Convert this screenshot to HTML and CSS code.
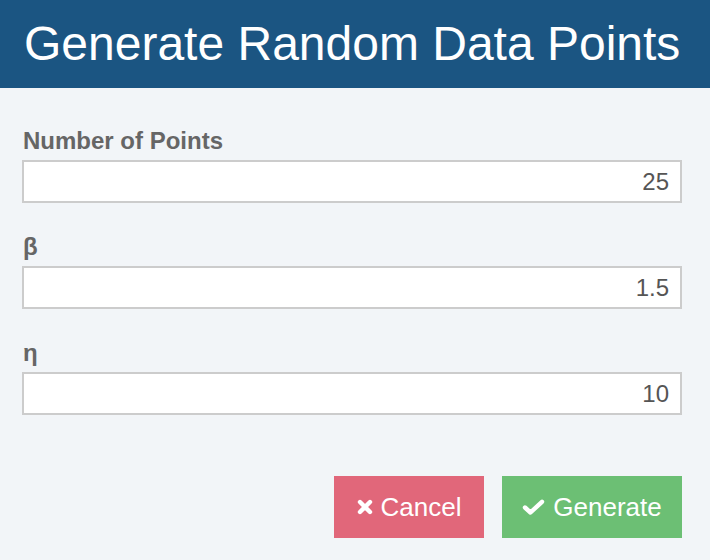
FILE: index.html
```html
<!DOCTYPE html>
<html lang="en">
<head>
    <meta charset="UTF-8">
    <meta name="viewport" content="width=device-width, initial-scale=1.0">
    <title>Generate Random Data Points</title>
    <link rel="stylesheet" href="styles.css">
</head>
<body>
    <div class="dialog">
        <div class="dialog-header">
            <h1>Generate Random Data Points</h1>
        </div>

        <div class="dialog-body">
            <div class="field">
                <label for="numPoints">Number of Points</label>
                <input type="text" id="numPoints" value="25">
            </div>
            <div class="field">
                <label for="beta">β</label>
                <input type="text" id="beta" value="1.5">
            </div>
            <div class="field">
                <label for="eta">η</label>
                <input type="text" id="eta" value="10">
            </div>
        </div>

        <div class="dialog-footer">
            <button class="btn btn-cancel">
                <svg class="icon" width="16" height="16" viewBox="0 0 16 16">
                    <path d="M3 3 L13 13 M13 3 L3 13" stroke="#fff" stroke-width="4.4" stroke-linecap="round"/>
                </svg>
                Cancel
            </button>
            <button class="btn btn-generate">
                <svg class="icon" width="23" height="16" viewBox="0 0 23 16">
                    <path d="M3 8.5 L8.5 13.5 L20 2.8" stroke="#fff" stroke-width="4.4" fill="none" stroke-linecap="round" stroke-linejoin="round"/>
                </svg>
                Generate
            </button>
        </div>
    </div>
</body>
</html>
```

FILE: styles.css
```css
body {
    margin: 0;
    font-family: "Liberation Sans", Arial, sans-serif;
    background-color: #f2f5f8;
}
.dialog {
    width: 710px;
    height: 560px;
    display: flex;
    flex-direction: column;
}
.dialog-header {
    background-color: #1b5582;
    height: 88px;
    display: flex;
    align-items: center;
    padding: 0 24px;
}
.dialog-header h1 {
    margin: 0;
    color: #fff;
    font-weight: normal;
    font-size: 48px;
    line-height: 1;
}
.dialog-body {
    padding: 40px 28px 0 22px;
    display: flex;
    flex-direction: column;
    gap: 31px;
}
.field {
    display: flex;
    flex-direction: column;
    gap: 6px;
}
.field label {
    font-size: 24px;
    font-weight: bold;
    color: #666;
    line-height: 26px;
    padding-left: 1px;
}
.field input {
    box-sizing: border-box;
    width: 660px;
    height: 43px;
    margin: 0;
    border: 2px solid #cccccc;
    background: #fff;
    text-align: right;
    padding: 0 11px;
    font-family: "Liberation Sans", Arial, sans-serif;
    font-size: 24px;
    color: #555;
    outline: none;
}
.dialog-footer {
    display: flex;
    justify-content: flex-end;
    gap: 18px;
    padding: 61px 28px 0 0;
}
.btn {
    height: 62px;
    border: none;
    color: #fff;
    font-family: "Liberation Sans", Arial, sans-serif;
    font-size: 26px;
    display: flex;
    align-items: center;
    justify-content: center;
    gap: 8px;
    cursor: pointer;
    padding: 0;
}
.btn-cancel {
    width: 150px;
    background-color: #e1677a;
}
.btn-generate {
    width: 180px;
    background-color: #6cbf74;
}
.icon {
    display: block;
}
```
